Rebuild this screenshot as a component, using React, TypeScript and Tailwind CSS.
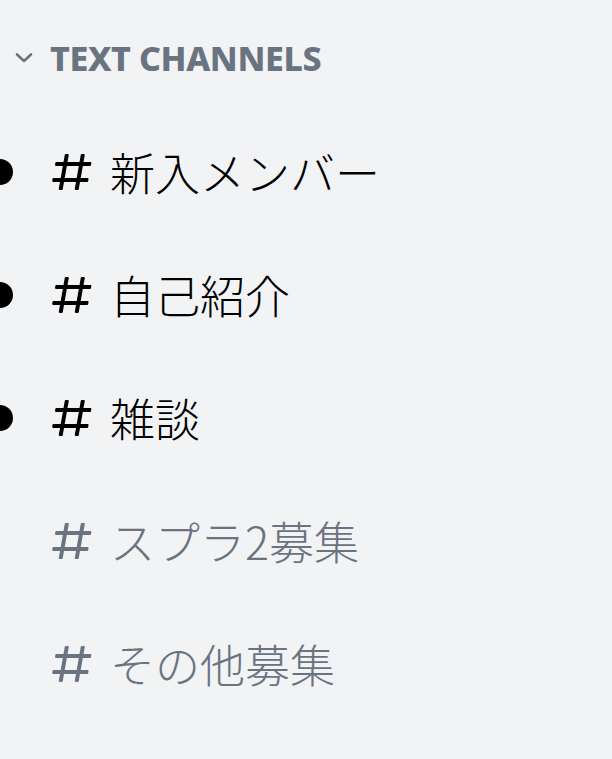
import React from "react";

const Hash = ({ color }: { color: string }) => (
  <svg width="48" height="48" viewBox="0 0 24 24" fill={color}>
    <path
      fillRule="evenodd"
      d="M5.88657 21C5.57547 21 5.3399 20.7189 5.39427 20.4126L6.00001 17H2.59511C2.28449 17 2.04905 16.7198 2.10259 16.4138L2.27759 15.4138C2.31946 15.1746 2.52722 15 2.77011 15H6.35001L7.41001 9H4.00511C3.69449 9 3.45905 8.71977 3.51259 8.41381L3.68759 7.41381C3.72946 7.17456 3.93722 7 4.18011 7H7.76001L8.39677 3.41262C8.43914 3.17391 8.64664 3 8.88907 3H9.87344C10.1845 3 10.4201 3.28107 10.3657 3.58738L9.76001 7H15.76L16.3968 3.41262C16.4391 3.17391 16.6466 3 16.8891 3H17.8734C18.1845 3 18.4201 3.28107 18.3657 3.58738L17.76 7H21.1649C21.4755 7 21.711 7.28023 21.6574 7.58619L21.4824 8.58619C21.4406 8.82544 21.2328 9 20.9899 9H17.41L16.35 15H19.7549C20.0655 15 20.301 15.2802 20.2474 15.5862L20.0724 16.5862C20.0306 16.8254 19.8228 17 19.5799 17H16L15.3632 20.5874C15.3209 20.8261 15.1134 21 14.8709 21H13.8866C13.5755 21 13.3399 20.7189 13.3943 20.4126L14 17H8.00001L7.36325 20.5874C7.32088 20.8261 7.11337 21 6.87094 21H5.88657ZM9.41045 9L8.35045 15H14.3504L15.4104 9H9.41045Z"
    />
  </svg>
);

const channels = [
  { name: "新入メンバー", unread: true },
  { name: "自己紹介", unread: true },
  { name: "雑談", unread: true },
  { name: "スプラ2募集", unread: false },
  { name: "その他募集", unread: false },
];

export default function App() {
  return (
    <div className="h-[759px] w-[612px] overflow-hidden bg-[#f2f3f5] flex flex-col">
      <div className="h-[110px] pt-[6px] flex items-center pl-[15px] shrink-0">
        <svg width="18" height="18" viewBox="0 0 18 18" fill="none" className="shrink-0">
          <path d="M2 5.5 L9 12 L16 5.5" stroke="#6a7480" strokeWidth="2.6" strokeLinecap="round" strokeLinejoin="round" />
        </svg>
        <span
          className="ml-[17px] text-[34px] font-extrabold text-[#6a7480] leading-none tracking-[-0.4px]"
          style={{ fontFamily: '"Noto Sans", sans-serif' }}
        >
          TEXT CHANNELS
        </span>
      </div>
      {channels.map((c) => (
        <div key={c.name} className="relative h-[123px] flex items-center pl-[48px] shrink-0">
          {c.unread && (
            <div className="absolute left-[-13px] top-1/2 -translate-y-1/2 w-[26px] h-[26px] rounded-full bg-black" />
          )}
          <Hash color={c.unread ? "#000000" : "#6a7480"} />
          <span
            className={`ml-[14px] text-[45px] font-light leading-none ${c.unread ? "text-black" : "text-[#6a7480]"}`}
            style={{ fontFamily: '"Noto Sans CJK JP", "Noto Sans", sans-serif' }}
          >
            {c.name}
          </span>
        </div>
      ))}
    </div>
  );
}
